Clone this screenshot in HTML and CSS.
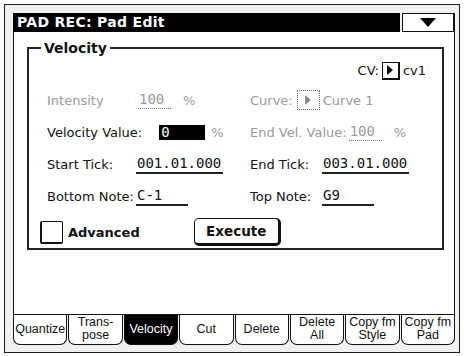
FILE: index.html
```html
<!DOCTYPE html>
<html lang="en">
<head>
    <meta charset="UTF-8">
    <title>PAD REC: Pad Edit</title>
    <link rel="stylesheet" href="styles.css">
</head>
<body>
    <div class="frame">
        <div class="screen">
            <div class="titlebar">
                <div class="title">PAD REC: Pad Edit</div>
                <div class="menu-btn"><span class="arrow-down"></span></div>
            </div>

            <div class="page">
                <fieldset class="group">
                    <legend>Velocity</legend>

                    <div class="row row-cv">
                        <span class="label">CV:</span>
                        <span class="pick"><span class="arrow-right"></span></span>
                        <span class="label">cv1</span>
                    </div>

                    <div class="row">
                        <div class="half">
                            <span class="label lbl-left disabled">Intensity</span>
                            <span class="value val-short disabled dotted">100</span>
                            <span class="unit disabled">%</span>
                        </div>
                        <div class="half">
                            <span class="label disabled">Curve:</span>
                            <span class="pick dotted-box"><span class="arrow-right grey"></span></span>
                            <span class="label disabled">Curve 1</span>
                        </div>
                    </div>

                    <div class="row">
                        <div class="half">
                            <span class="label">Velocity Value:</span>
                            <span class="field">0</span>
                            <span class="unit disabled">%</span>
                        </div>
                        <div class="half">
                            <span class="label disabled">End Vel. Value:</span>
                            <span class="value val-short disabled dotted">100</span>
                            <span class="unit disabled">%</span>
                        </div>
                    </div>

                    <div class="row">
                        <div class="half">
                            <span class="label lbl-left">Start Tick:</span>
                            <span class="value val-tick">001.01.000</span>
                        </div>
                        <div class="half">
                            <span class="label lbl-right">End Tick:</span>
                            <span class="value val-tick">003.01.000</span>
                        </div>
                    </div>

                    <div class="row">
                        <div class="half">
                            <span class="label lbl-left">Bottom Note:</span>
                            <span class="value val-note">C-1</span>
                        </div>
                        <div class="half">
                            <span class="label lbl-right">Top Note:</span>
                            <span class="value val-note">G9</span>
                        </div>
                    </div>

                    <div class="row row-actions">
                        <span class="checkbox"></span>
                        <span class="check-label">Advanced</span>
                        <button class="btn">Execute</button>
                    </div>
                </fieldset>
            </div>

            <div class="tabs">
                <div class="tab">Quantize</div>
                <div class="tab">Trans-<br>pose</div>
                <div class="tab active">Velocity</div>
                <div class="tab">Cut</div>
                <div class="tab">Delete</div>
                <div class="tab">Delete<br>All</div>
                <div class="tab">Copy fm<br>Style</div>
                <div class="tab">Copy fm<br>Pad</div>
            </div>
        </div>
    </div>
</body>
</html>
```

FILE: styles.css
```css
* {
    box-sizing: border-box;
}

body {
    margin: 0;
    background-color: #fff;
    font-family: 'DejaVu Sans', sans-serif;
    color: #111;
}

.frame {
    margin: 4px 0 0 4px;
    width: 456px;
    height: 349px;
    border: 1px solid #1a1a1a;
    background-color: #f1f1f1;
    padding: 8px 4px 7px 8px;
}

.screen {
    display: flex;
    flex-direction: column;
    height: 100%;
}

/* title bar */
.titlebar {
    display: flex;
    gap: 2px;
    height: 19px;
}

.title {
    flex: 1;
    background-color: #000;
    color: #fff;
    font-weight: bold;
    font-size: 14px;
    line-height: 19px;
    padding-left: 4px;
    letter-spacing: 0.3px;
}

.menu-btn {
    width: 53px;
    border: 1px solid #111;
    border-right-width: 2px;
    background-color: #fff;
    display: flex;
    align-items: center;
    justify-content: center;
}

.arrow-down {
    width: 0;
    height: 0;
    border-left: 8px solid transparent;
    border-right: 8px solid transparent;
    border-top: 9px solid #000;
}

/* page */
.page {
    height: 283px;
    background-color: #fff;
    border-left: 1px solid #111;
    border-right: 1px solid #111;
    padding: 8px 10px 0 13px;
}

.group {
    margin: 0;
    padding: 0;
    border: 2px solid #222;
}

.group legend {
    margin-left: 12px;
    padding: 0 3px;
    font-weight: bold;
    font-size: 14px;
    line-height: 16px;
}

.row {
    display: flex;
    align-items: center;
    height: 32px;
    font-size: 13px;
    padding-left: 18px;
}

.row-cv {
    height: 27px;
    margin-top: 1px;
    justify-content: flex-end;
    padding-right: 16px;
    gap: 2px;
}

.half {
    display: flex;
    align-items: center;
}

.half:first-child {
    width: 203px;
}

.label {
    white-space: nowrap;
}

.lbl-left {
    width: 89px;
}

.lbl-right {
    width: 72px;
}

.disabled {
    color: #9a9a9a;
}

.value {
    font-family: 'DejaVu Sans Mono', monospace;
    font-size: 14px;
    border-bottom: 2px solid #222;
    padding: 0 0 1px 1px;
    line-height: 16px;
}

.value.dotted {
    border-bottom: 1px dotted #777;
}

.val-short {
    width: 33px;
    margin-left: 2px;
}

.val-tick {
    width: 87px;
}

.val-note {
    width: 52px;
}

.unit {
    margin-left: 12px;
}

.field {
    margin-left: 17px;
    width: 46px;
    height: 15px;
    background-color: #000;
    color: #fff;
    font-family: 'DejaVu Sans Mono', monospace;
    font-size: 14px;
    line-height: 15px;
    padding-left: 2px;
}

.field + .unit {
    margin-left: 6px;
}

.pick {
    width: 18px;
    height: 18px;
    border: 1px solid #111;
    border-right-width: 2px;
    border-bottom-width: 2px;
    display: inline-flex;
    align-items: center;
    justify-content: center;
    margin: 0 1px;
}

.pick.dotted-box {
    width: 23px;
    height: 20px;
    border: 1px dotted #666;
    margin: 0 3px 0 4px;
}

.arrow-right {
    width: 0;
    height: 0;
    border-top: 5px solid transparent;
    border-bottom: 5px solid transparent;
    border-left: 6px solid #000;
}

.arrow-right.grey {
    border-left-color: #888;
}

/* checkbox and execute */
.row-actions {
    margin-top: 4px;
    padding-left: 11px;
}

.checkbox {
    width: 23px;
    height: 23px;
    border: 1px solid #111;
    border-left-width: 2px;
    border-bottom-width: 2px;
    border-radius: 2px;
}

.check-label {
    margin-left: 5px;
    font-weight: bold;
    font-size: 13px;
}

.btn {
    margin-left: 54px;
    width: 87px;
    height: 28px;
    background-color: #fff;
    border: 1px solid #111;
    border-right-width: 3px;
    border-bottom-width: 3px;
    border-radius: 5px;
    font-family: 'DejaVu Sans', sans-serif;
    font-weight: bold;
    font-size: 13.5px;
    color: #111;
    padding: 0;
}

/* bottom tabs */
.tabs {
    display: flex;
    gap: 1px;
    height: 31px;
    border-top: 1px solid #111;
}

.tab {
    flex: 1;
    display: flex;
    align-items: center;
    justify-content: center;
    text-align: center;
    background-color: #fff;
    border: 1px solid #111;
    border-top: none;
    border-radius: 0 0 7px 7px;
    font-family: 'Liberation Sans', sans-serif;
    font-size: 12.5px;
    line-height: 13px;
    padding-bottom: 1px;
}

.tab.active {
    background-color: #000;
    color: #fff;
}
```
